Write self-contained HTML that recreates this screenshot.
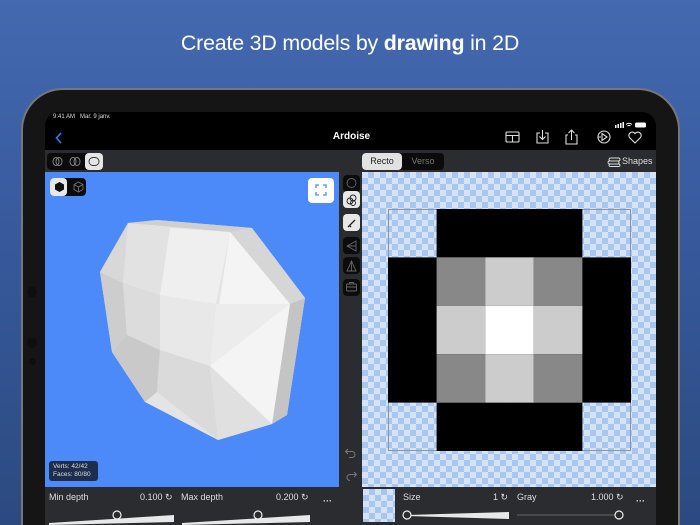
<!DOCTYPE html>
<html style="width:700px;height:525px;overflow:hidden"><head><meta charset="utf-8"><style>
*{margin:0;padding:0;box-sizing:border-box}
body{width:700px;height:525px;overflow:hidden;position:relative;background:linear-gradient(180deg,#4469b0 0%,#36589a 50%,#2c4a80 100%);font-family:"Liberation Sans",sans-serif;color:#fff}
.title{position:absolute;top:31px;left:0;width:700px;text-align:center;font-size:21.4px;letter-spacing:-0.2px}
.frame{position:absolute;left:21px;top:88px;width:659px;height:437px;background:#151515;border-radius:42px 42px 0 0;border:2px solid #777;border-bottom:none}
.screen{position:absolute;left:45px;top:112px;width:611px;height:413px;background:#000;border-radius:14px 14px 0 0;overflow:hidden}
.abs{position:absolute}
.chk{background-color:#d4e3f6;background-image:linear-gradient(45deg,#a9c7ee 25%,transparent 25%,transparent 75%,#a9c7ee 75%),linear-gradient(45deg,#a9c7ee 25%,transparent 25%,transparent 75%,#a9c7ee 75%);background-size:12px 12px;background-position:0 0,6px 6px}
.lbl{font-size:9px;color:#ddd}
.tb{position:absolute;left:298px;width:17px;height:17px;border-radius:4px;background:#0c0c0c}
.tb.on{background:#e8e8e8}
</style></head><body>
<div class="title">Create 3D models by <b>drawing</b> in 2D</div>
<div class="frame"></div>
<div class="abs" style="left:27px;top:287px;width:10px;height:10px;border-radius:5px;background:#0e0e0e"></div>
<div class="abs" style="left:27px;top:338px;width:10px;height:10px;border-radius:5px;background:#0e0e0e"></div>
<div class="abs" style="left:29px;top:358px;width:7px;height:7px;border-radius:4px;background:#0e0e0e"></div>
<div class="screen">
 <div class="abs" style="left:8px;top:2px;font-size:6px;color:#ddd">9:41 AM&nbsp;&nbsp; Mar. 9 janv.</div>
 <div class="abs" style="left:570px;top:3px;width:36px;height:6px">
  <svg width="36" height="6"><rect x="0" y="3" width="1.5" height="3" fill="#fff"/><rect x="2.5" y="2" width="1.5" height="4" fill="#fff"/><rect x="5" y="1" width="1.5" height="5" fill="#fff"/><rect x="7.5" y="0" width="1.5" height="6" fill="#fff"/><path d="M11 2.5 Q14 0 17 2.5 M12.5 4 Q14 3 15.5 4" stroke="#fff" fill="none" stroke-width="1"/><rect x="20" y="0.5" width="11" height="5" rx="1.5" fill="#fff"/></svg>
 </div>
 <svg class="abs" style="left:9px;top:19px" width="10" height="14"><path d="M7 2 L2.5 7 L7 12" stroke="#2f7cf6" stroke-width="1.6" fill="none"/></svg>
 <div class="abs" style="left:0;width:611px;top:19px;text-align:center;font-size:10px;font-weight:bold;padding-left:2px">Ardoise</div>
 <svg class="abs" style="left:460px;top:16px" width="150" height="18" fill="none" stroke="#ddd" stroke-width="1.1">
  <rect x="1" y="4" width="13" height="10" rx="1"/><path d="M1 7.5H14M7.5 7.5V14"/>
  <path d="M35 5h-3v10h11v-10h-3M37.5 2v9M34.5 8.5l3 3 3-3"/>
  <path d="M63 7h-2v9h11v-9h-2M66.5 12V2M63.5 5l3-3 3 3"/>
  <circle cx="99" cy="9" r="6"/><path d="M97 5.5v7l5-3.5zM93 9h3"/>
  <path d="M130 15 L124.5 9.5 A3 3 0 0 1 130 5.5 A3 3 0 0 1 135.5 9.5Z"/>
 </svg>
 <div class="abs" style="left:0;top:38px;width:611px;height:22px;background:#2b2c2f"></div>
 <div class="abs" style="left:2px;top:41px;width:56px;height:17px;background:#0b0b0b;border-radius:4px"></div>
 <div class="abs" style="left:40px;top:41px;width:18px;height:17px;background:#e6e6e6;border-radius:4px"></div>
 <svg class="abs" style="left:6px;top:44px" width="52" height="11" fill="none" stroke="#888" stroke-width="0.9"><ellipse cx="5" cy="5.5" rx="3" ry="4"/><ellipse cx="8" cy="5.5" rx="3" ry="4"/><ellipse cx="22" cy="5.5" rx="3" ry="4"/><ellipse cx="26" cy="5.5" rx="3" ry="4"/><rect x="38" y="1.5" width="10" height="8" rx="4" stroke="#333"/></svg>
 <div class="abs" style="left:317px;top:41px;width:82px;height:17px;background:#0b0b0b;border-radius:4px"></div>
 <div class="abs" style="left:317px;top:41px;width:40px;height:17px;background:#e2e2e2;border-radius:4px;color:#222;font-size:9px;text-align:center;line-height:17px">Recto</div>
 <div class="abs" style="left:357px;top:41px;width:42px;height:17px;color:#777;font-size:9px;text-align:center;line-height:17px">Verso</div>
 <svg class="abs" style="left:562px;top:45px" width="14" height="10" fill="none" stroke="#ddd" stroke-width="0.9"><rect x="2" y="1" width="11" height="3" rx="1.5"/><rect x="1" y="4" width="11" height="3" rx="1.5"/><rect x="2" y="7" width="11" height="2.5" rx="1.2"/></svg>
 <div class="abs" style="left:577px;top:44px;font-size:9px;color:#ddd">Shapes</div>
 <div class="abs" style="left:0;top:60px;width:294px;height:315px;background:#4b8af8"></div>
 <div class="abs" style="left:5px;top:66px;width:36px;height:18px;background:#0b0b0b;border-radius:4px"></div>
 <div class="abs" style="left:5px;top:66px;width:17px;height:18px;background:#e8e8e8;border-radius:4px"></div>
 <svg class="abs" style="left:8px;top:69px" width="32" height="12"><path d="M6.5 1L11 3.5V8.5L6.5 11L2 8.5V3.5Z" fill="#111"/><path d="M25.5 1L30 3.5V8.5L25.5 11L21 8.5V3.5ZM21 3.5L25.5 6L30 3.5M25.5 6V11" fill="none" stroke="#777" stroke-width="0.8"/></svg>
 <div class="abs" style="left:263px;top:66px;width:26px;height:25px;background:#fff;border-radius:4px"></div>
 <svg class="abs" style="left:270px;top:72px" width="12" height="12" fill="none" stroke="#4b8af8" stroke-width="1.3"><path d="M1 4V1H4M8 1H11V4M11 8V11H8M4 11H1V8"/></svg>
 <svg class="abs" style="left:0;top:60px" width="294" height="315">
  <g transform="translate(-45,-172)">
   <polygon points="128,223 157,220 252,228 305,298 287,415 272,424 218,440 145,402 112,352 100,272" fill="#e4e4e4"/>
   <polygon points="128,223 157,220 252,228 230,232" fill="#cfcfcf"/>
   <polygon points="252,228 305,298 290,304 230,232" fill="#d6d6d6"/>
   <polygon points="290,304 305,298 287,415 272,424" fill="#c4c4c4"/>
   <polygon points="230,232 290,304 272,424 210,366" fill="#f4f4f4"/>
   <polygon points="170,228 230,232 216,304 160,295" fill="#efefef"/>
   <polygon points="128,223 170,228 160,295 123,283" fill="#e2e2e2"/>
   <polygon points="128,223 123,283 100,272" fill="#d8d8d8"/>
   <polygon points="100,272 123,283 127,335 112,352" fill="#cdcdcd"/>
   <polygon points="123,283 160,295 160,350 127,335" fill="#dcdcdc"/>
   <polygon points="160,295 216,304 210,366 160,350" fill="#e8e8e8"/>
   <polygon points="112,352 127,335 160,350 157,392 145,402" fill="#c9c9c9"/>
   <polygon points="160,350 210,366 218,440 157,392" fill="#dadada"/>
   <polygon points="210,366 272,424 218,440" fill="#e0e0e0"/>
   <polygon points="216,304 290,304 210,366" fill="#ececec"/>
  </g>
 </svg>
 <div class="abs" style="left:4px;top:349px;width:49px;height:20px;background:#1f2d4d;border-radius:3px;font-size:6.5px;line-height:8px;padding:2px 4px;color:#ddd">Verts: 42/42<br>Faces: 80/80</div>
 <div class="abs" style="left:294px;top:60px;width:23px;height:315px;background:#2b2c2f"></div>
 <div class="tb" style="top:63px"></div><div class="tb on" style="top:79px"></div><div class="tb on" style="top:102px"></div>
 <div class="tb" style="top:125px"></div><div class="tb" style="top:145px"></div><div class="tb" style="top:167px"></div>
 <svg class="abs" style="left:298px;top:63px" width="17" height="125" fill="none" stroke="#666" stroke-width="0.9">
  <circle cx="8.5" cy="8" r="4.5"/>
  <g stroke="#222"><circle cx="7" cy="26" r="3"/><circle cx="10" cy="23" r="3"/><circle cx="10" cy="28" r="2.5"/></g>
  <path d="M5 52L12 45M6 50l2 2" stroke="#222" stroke-width="1.3"/>
  <path d="M4 71L13 66V76Z M4 71H13"/>
  <path d="M8.5 86L4 96H13Z M8.5 86V96"/>
  <rect x="3.5" y="109" width="10" height="7" rx="1"/><path d="M6.5 109V107.5H10.5V109M3.5 112H13.5"/>
 </svg>
 <svg class="abs" style="left:299px;top:334px" width="14" height="36" fill="none" stroke="#777" stroke-width="1"><path d="M4 3L1.5 5.5L4 8M1.5 5.5H8A3 3 0 0 1 8 11.5H5"/><path d="M10 26L12.5 28.5L10 31M12.5 28.5H6A3 3 0 0 0 6 34.5"/></svg>
 <div class="abs chk" style="left:317px;top:60px;width:294px;height:315px"></div>
 <div class="abs" style="left:343px;top:97px;width:243px;height:242px;border:1px solid #8a97a8"></div>
 <svg class="abs" style="left:343px;top:97px" width="243" height="242">
  <rect x="48.6" y="0" width="145.8" height="48.4" fill="#000"/>
  <rect x="0" y="48.4" width="243" height="145.2" fill="#000"/>
  <rect x="48.6" y="193.6" width="145.8" height="48.4" fill="#000"/>
  <rect x="48.6" y="48.4" width="48.6" height="48.4" fill="#888"/>
  <rect x="97.2" y="48.4" width="48.6" height="48.4" fill="#ccc"/>
  <rect x="145.8" y="48.4" width="48.6" height="48.4" fill="#888"/>
  <rect x="48.6" y="96.8" width="48.6" height="48.4" fill="#ccc"/>
  <rect x="97.2" y="96.8" width="48.6" height="48.4" fill="#fff"/>
  <rect x="145.8" y="96.8" width="48.6" height="48.4" fill="#ccc"/>
  <rect x="48.6" y="145.2" width="48.6" height="48.4" fill="#888"/>
  <rect x="97.2" y="145.2" width="48.6" height="48.4" fill="#ccc"/>
  <rect x="145.8" y="145.2" width="48.6" height="48.4" fill="#888"/>
 </svg>
 <div class="abs" style="left:0;top:375px;width:611px;height:38px;background:#2b2c2f"></div>
 <div class="abs lbl" style="left:4px;top:380px">Min depth</div>
 <div class="abs lbl" style="left:95px;top:380px">0.100 ↻</div>
 <div class="abs lbl" style="left:136px;top:380px">Max depth</div>
 <div class="abs lbl" style="left:231px;top:380px">0.200 ↻</div>
 <div class="abs lbl" style="left:278px;top:384px;font-weight:bold">···</div>
 <svg class="abs" style="left:0;top:393px" width="611" height="20">
  <polygon points="4,18 129,10 129,17 4,20" fill="#e8e8e8"/>
  <circle cx="72" cy="10" r="4" fill="#2b2c2f" stroke="#eee" stroke-width="1.2"/>
  <polygon points="137,18 265,10 265,17 137,20" fill="#e8e8e8"/>
  <circle cx="213" cy="10" r="4" fill="#2b2c2f" stroke="#eee" stroke-width="1.2"/>
  <polygon points="362,10 464,7 464,14 362,11" fill="#e8e8e8"/>
  <circle cx="362" cy="10" r="4" fill="#2b2c2f" stroke="#eee" stroke-width="1.2"/>
  <line x1="472" y1="10" x2="570" y2="10" stroke="#666" stroke-width="1"/>
  <circle cx="574" cy="10" r="4" fill="#2b2c2f" stroke="#eee" stroke-width="1.2"/>
 </svg>
 <div class="abs chk" style="left:318px;top:377px;width:32px;height:33px"></div>
 <div class="abs lbl" style="left:358px;top:380px">Size</div>
 <div class="abs lbl" style="left:448px;top:380px">1 ↻</div>
 <div class="abs lbl" style="left:472px;top:380px">Gray</div>
 <div class="abs lbl" style="left:546px;top:380px">1.000 ↻</div>
 <div class="abs lbl" style="left:591px;top:384px;font-weight:bold">···</div>
</div>
</body></html>
